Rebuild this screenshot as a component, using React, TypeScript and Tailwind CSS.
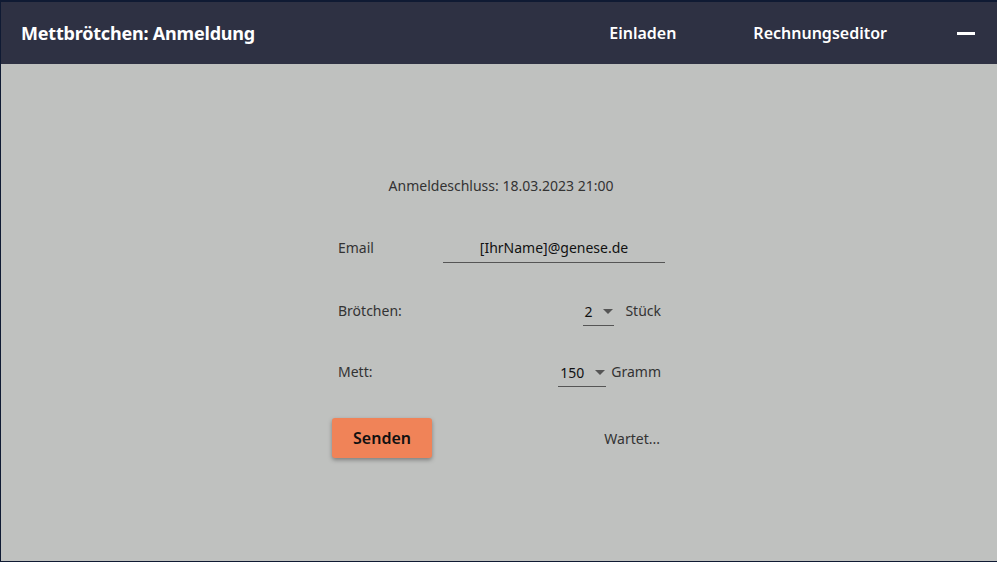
import React from "react";

export default function App() {
  const font = { fontFamily: '"Noto Sans", "Open Sans", sans-serif' };
  return (
    <div
      className="w-[997px] h-[562px] flex flex-col bg-[#0f1a33] pt-[2px] pl-[1px] pb-[1px] overflow-hidden"
      style={font}
    >
      <div className="flex-1 flex flex-col bg-[#bfc1bf]">
        <header className="h-[62px] bg-[#2e3143] flex items-center pl-[20px] pr-[22px] text-white">
          <h1 className="text-[18px] font-bold tracking-[-0.2px]">Mettbrötchen: Anmeldung</h1>
          <div className="flex-1" />
          <nav className="flex items-center">
            <span className="text-[16px] font-semibold mr-[77px]">Einladen</span>
            <span className="text-[16px] font-semibold mr-[70px]">Rechnungseditor</span>
            <span className="w-[18px] h-[3px] bg-white" />
          </nav>
        </header>
        <main className="flex-1 flex justify-center">
          <div className="w-[334px] mt-[111px] flex flex-col text-[14px] text-[#333]">
            <div className="text-center ml-[4px]">Anmeldeschluss: 18.03.2023 21:00</div>
            <div className="flex items-end mt-[41px] pl-[6px]">
              <span className="w-[105px] pb-[5px]">Email</span>
              <div className="w-[222px] border-b border-[#555] text-center text-[#111] pb-[4px]">
                [IhrName]@genese.de
              </div>
            </div>
            <div className="flex items-end mt-[37px] pl-[6px]">
              <span className="flex-1 pb-[5px]">Brötchen:</span>
              <div className="w-[31px] border-b border-[#555] flex items-center text-[#111] pb-[3px]">
                <span className="ml-[1px]">2</span>
                <svg width="10" height="6" viewBox="0 0 10 6" className="ml-auto mr-[1px]">
                  <path d="M0 0 L10 0 L5 5 Z" fill="#555" />
                </svg>
              </div>
              <span className="ml-[11px] pb-[5px] mr-[5px]">Stück</span>
            </div>
            <div className="flex items-end mt-[35px] pl-[6px]">
              <span className="flex-1 pb-[5px]">Mett:</span>
              <div className="w-[48px] border-b border-[#555] flex items-center text-[#111] pb-[3px]">
                <span className="ml-[2px]">150</span>
                <svg width="10" height="6" viewBox="0 0 10 6" className="ml-auto mr-[1px]">
                  <path d="M0 0 L10 0 L5 5 Z" fill="#555" />
                </svg>
              </div>
              <span className="ml-[5px] pb-[5px] mr-[5px]">Gramm</span>
            </div>
            <div className="flex items-center mt-[31px]">
              <button className="w-[100px] h-[40px] rounded-[3px] bg-[#f08358] text-[16px] font-semibold text-[#111] shadow-[0_2px_4px_rgba(0,0,0,0.35)]">
                Senden
              </button>
              <div className="flex-1" />
              <span className="mr-[6px]">Wartet...</span>
            </div>
          </div>
        </main>
      </div>
    </div>
  );
}
